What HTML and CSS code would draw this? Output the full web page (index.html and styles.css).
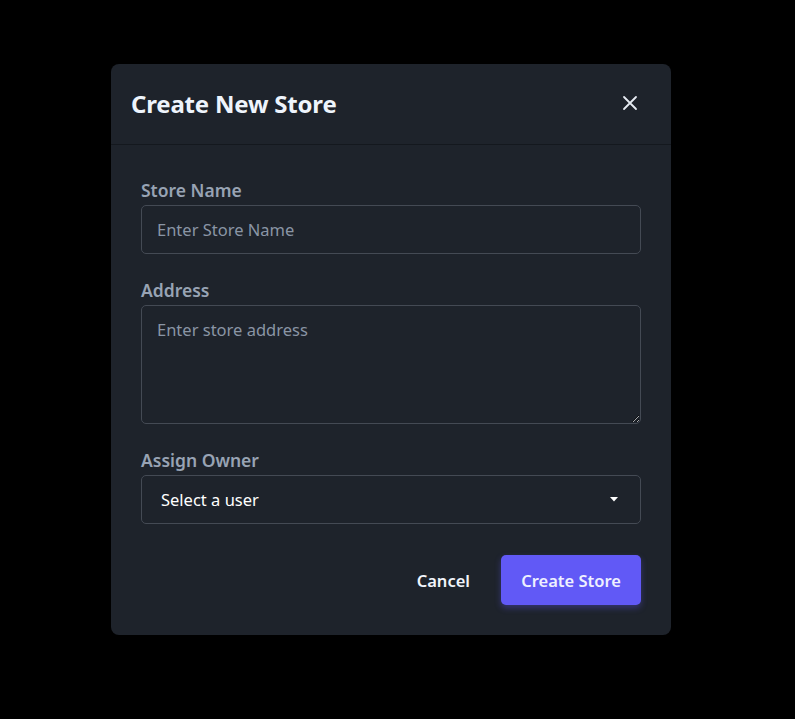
FILE: index.html
```html
<!DOCTYPE html>
<html lang="en">
<head>
<meta charset="utf-8">
<title>Create New Store</title>
<link rel="stylesheet" href="styles.css">
</head>
<body>
<div class="overlay">
  <div class="modal">
    <div class="modal-header">
      <h2 class="modal-title">Create New Store</h2>
      <button class="close-btn" aria-label="Close">
        <svg width="16" height="16" viewBox="0 0 16 16"><path d="M2 2 L14 14 M14 2 L2 14" stroke="#e6ebf2" stroke-width="1.8" stroke-linecap="round"/></svg>
      </button>
    </div>
    <form class="modal-body">
      <div class="field">
        <label class="label">Store Name</label>
        <input class="input" type="text" placeholder="Enter Store Name">
      </div>
      <div class="field">
        <label class="label">Address</label>
        <textarea class="input textarea" placeholder="Enter store address"></textarea>
      </div>
      <div class="field">
        <label class="label">Assign Owner</label>
        <div class="select-wrap">
          <select class="input select"><option>Select a user</option></select>
          <svg class="caret" width="8" height="5" viewBox="0 0 8 5"><path d="M0 0 H8 L4 4.5 Z" fill="#ffffff"/></svg>
        </div>
      </div>
      <div class="footer">
        <button type="button" class="btn-cancel">Cancel</button>
        <button type="button" class="btn-primary">Create Store</button>
      </div>
    </form>
  </div>
</div>
</body>
</html>
```

FILE: styles.css
```css
* { box-sizing: border-box; }
html, body { margin: 0; padding: 0; background: #000; height: 100%; }
body { font-family: "Noto Sans", "Open Sans", sans-serif; }
.overlay { padding: 64px 0 0 111px; display: flex; justify-content: flex-start; }
.modal {
  width: 560px;
  background: #1e232b;
  border-radius: 8px;
}
.modal-header {
  height: 81px;
  display: flex;
  align-items: center;
  justify-content: space-between;
  padding: 0 33px 2px 20px;
  border-bottom: 1px solid #14181e;
}
.modal-title {
  margin: 0;
  font-size: 24px;
  font-weight: 700;
  color: #eef4fc;
  letter-spacing: -0.2px;
}
.close-btn {
  background: none; border: none; padding: 0; width: 16px; height: 16px;
  display: flex; cursor: pointer;
}
.modal-body { padding: 33px 30px 30px; display: flex; flex-direction: column; }
.field { display: flex; flex-direction: column; margin-bottom: 24px; }
.label {
  font-size: 17.5px;
  font-weight: 600;
  color: #98a3b4;
  line-height: 24px;
  margin-bottom: 3px;
}
.input {
  width: 100%;
  height: 49px;
  background: #1e232b;
  border: 1px solid #444a54;
  border-radius: 5px;
  padding: 0 15px;
  font-family: inherit;
  font-size: 16.5px;
  color: #ffffff;
  outline: none;
}
.input::placeholder { color: #8a95a5; }
.textarea { height: 119px; padding: 12px 15px; resize: vertical; display: block; }
.select-wrap { position: relative; }
.select { appearance: none; -webkit-appearance: none; padding-left: 19px; color: #ffffff; }
.caret { position: absolute; right: 23px; top: 22px; pointer-events: none; }
.footer { display: flex; justify-content: flex-end; align-items: center; gap: 31px; margin-top: 7px; }
.btn-cancel {
  background: none; border: none; color: #f1f5fb;
  font-family: inherit; font-size: 16.5px; font-weight: 600; padding: 0;
}
.btn-primary {
  width: 140px; height: 50px;
  background: #6159f6;
  border: none; border-radius: 5px;
  color: #eef0ff;
  font-family: inherit; font-size: 16.5px; font-weight: 600;
  box-shadow: 0 3px 6px rgba(97, 89, 246, 0.35);
}
```
